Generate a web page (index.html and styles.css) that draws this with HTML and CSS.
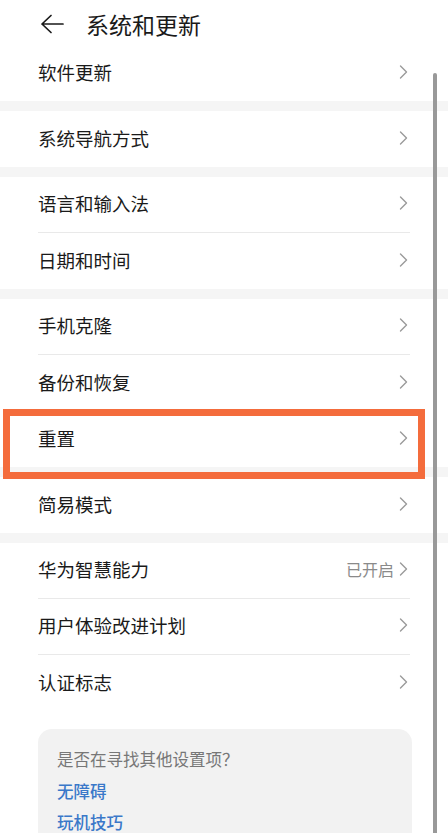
FILE: index.html
```html
<!DOCTYPE html>
<html lang="zh-CN">
<head>
<meta charset="utf-8">
<title>系统和更新</title>
<link rel="stylesheet" href="styles.css">
</head>
<body>
<div class="page">
  <header class="header">
    <svg class="back" width="24" height="20" viewBox="0 0 24 20"><path d="M11 1.5 L2 10 L11 18.5 M2 10 H23" fill="none" stroke="#1a1a1a" stroke-width="1.7" stroke-linecap="round" stroke-linejoin="round"/></svg>
    <h1 class="title">系统和更新</h1>
  </header>

  <section class="group">
    <div class="row"><span class="label">软件更新</span><svg class="chev" width="9" height="14" viewBox="0 0 9 14"><path d="M1.5 1 L7.5 7 L1.5 13" fill="none" stroke="#9a9a9a" stroke-width="1.4" stroke-linecap="round" stroke-linejoin="round"/></svg></div>
  </section>
  <div class="band"></div>
  <section class="group">
    <div class="row"><span class="label">系统导航方式</span><svg class="chev" width="9" height="14" viewBox="0 0 9 14"><path d="M1.5 1 L7.5 7 L1.5 13" fill="none" stroke="#9a9a9a" stroke-width="1.4" stroke-linecap="round" stroke-linejoin="round"/></svg></div>
  </section>
  <div class="band"></div>
  <section class="group">
    <div class="row sep"><span class="label">语言和输入法</span><svg class="chev" width="9" height="14" viewBox="0 0 9 14"><path d="M1.5 1 L7.5 7 L1.5 13" fill="none" stroke="#9a9a9a" stroke-width="1.4" stroke-linecap="round" stroke-linejoin="round"/></svg></div>
    <div class="row"><span class="label">日期和时间</span><svg class="chev" width="9" height="14" viewBox="0 0 9 14"><path d="M1.5 1 L7.5 7 L1.5 13" fill="none" stroke="#9a9a9a" stroke-width="1.4" stroke-linecap="round" stroke-linejoin="round"/></svg></div>
  </section>
  <div class="band"></div>
  <section class="group">
    <div class="row sep"><span class="label">手机克隆</span><svg class="chev" width="9" height="14" viewBox="0 0 9 14"><path d="M1.5 1 L7.5 7 L1.5 13" fill="none" stroke="#9a9a9a" stroke-width="1.4" stroke-linecap="round" stroke-linejoin="round"/></svg></div>
    <div class="row"><span class="label">备份和恢复</span><svg class="chev" width="9" height="14" viewBox="0 0 9 14"><path d="M1.5 1 L7.5 7 L1.5 13" fill="none" stroke="#9a9a9a" stroke-width="1.4" stroke-linecap="round" stroke-linejoin="round"/></svg></div>
    <div class="row"><span class="label">重置</span><svg class="chev" width="9" height="14" viewBox="0 0 9 14"><path d="M1.5 1 L7.5 7 L1.5 13" fill="none" stroke="#9a9a9a" stroke-width="1.4" stroke-linecap="round" stroke-linejoin="round"/></svg></div>
  </section>
  <div class="band"></div>
  <section class="group">
    <div class="row"><span class="label">简易模式</span><svg class="chev" width="9" height="14" viewBox="0 0 9 14"><path d="M1.5 1 L7.5 7 L1.5 13" fill="none" stroke="#9a9a9a" stroke-width="1.4" stroke-linecap="round" stroke-linejoin="round"/></svg></div>
  </section>
  <div class="band"></div>
  <section class="group">
    <div class="row sep"><span class="label">华为智慧能力</span><span class="right"><span class="value">已开启</span><svg class="chev" width="9" height="14" viewBox="0 0 9 14"><path d="M1.5 1 L7.5 7 L1.5 13" fill="none" stroke="#9a9a9a" stroke-width="1.4" stroke-linecap="round" stroke-linejoin="round"/></svg></span></div>
    <div class="row sep"><span class="label">用户体验改进计划</span><svg class="chev" width="9" height="14" viewBox="0 0 9 14"><path d="M1.5 1 L7.5 7 L1.5 13" fill="none" stroke="#9a9a9a" stroke-width="1.4" stroke-linecap="round" stroke-linejoin="round"/></svg></div>
    <div class="row"><span class="label">认证标志</span><svg class="chev" width="9" height="14" viewBox="0 0 9 14"><path d="M1.5 1 L7.5 7 L1.5 13" fill="none" stroke="#9a9a9a" stroke-width="1.4" stroke-linecap="round" stroke-linejoin="round"/></svg></div>
  </section>

  <div class="card">
    <p class="card-q">是否在寻找其他设置项？</p>
    <a class="link">无障碍</a>
    <a class="link">玩机技巧</a>
  </div>

  <div class="highlight"></div>
  <div class="scrollbar"></div>
</div>
</body>
</html>
```

FILE: styles.css
```css
html, body {
  margin: 0;
  padding: 0;
  background: #ffffff;
}
body {
  font-family: "Noto Sans CJK SC", "Noto Sans", sans-serif;
  color: #1a1a1a;
}
.page {
  position: relative;
  width: 448px;
  height: 833px;
  overflow: hidden;
}
.header {
  height: 45px;
  display: flex;
  align-items: center;
  padding-left: 40px;
  padding-top: 3px;
  box-sizing: border-box;
}
.back {
  display: block;
  margin-right: 22px;
}
.title {
  margin: 0;
  font-size: 23px;
  font-weight: 400;
  line-height: 30px;
  color: #1a1a1a;
}
.band {
  height: 10px;
  background: #f5f5f5;
}
.group {
  padding: 0 38px 0 38px;
}
.row {
  height: 56px;
  display: flex;
  align-items: center;
  justify-content: space-between;
  box-sizing: border-box;
  padding-bottom: 3px;
}
.row.sep {
  border-bottom: 1px solid #e9e9e9;
}
.label {
  font-size: 18.5px;
  line-height: 24px;
  color: #1a1a1a;
}
.right {
  display: flex;
  align-items: center;
}
.value {
  font-size: 16px;
  line-height: 22px;
  color: #8a8a8a;
  margin-right: 5px;
}
.chev {
  display: block;
  margin-right: 2px;
}
.card {
  margin: 18px 36px 0 38px;
  background: #f2f2f2;
  border-radius: 14px;
  padding: 18px 19px 20px 19px;
  display: flex;
  flex-direction: column;
  gap: 7.5px;
}
.card-q {
  margin: 0;
  font-size: 16.5px;
  line-height: 24px;
  color: #777777;
}
.link {
  font-size: 16.5px;
  line-height: 24px;
  font-weight: 500;
  color: #3a78c9;
}
.highlight {
  position: absolute;
  left: 3px;
  top: 409px;
  width: 422px;
  height: 70px;
  box-sizing: border-box;
  border: 7px solid #f46c3c;
}
.scrollbar {
  position: absolute;
  left: 433px;
  top: 73px;
  width: 4px;
  height: 780px;
  border-radius: 2px;
  background: #999999;
}
```
